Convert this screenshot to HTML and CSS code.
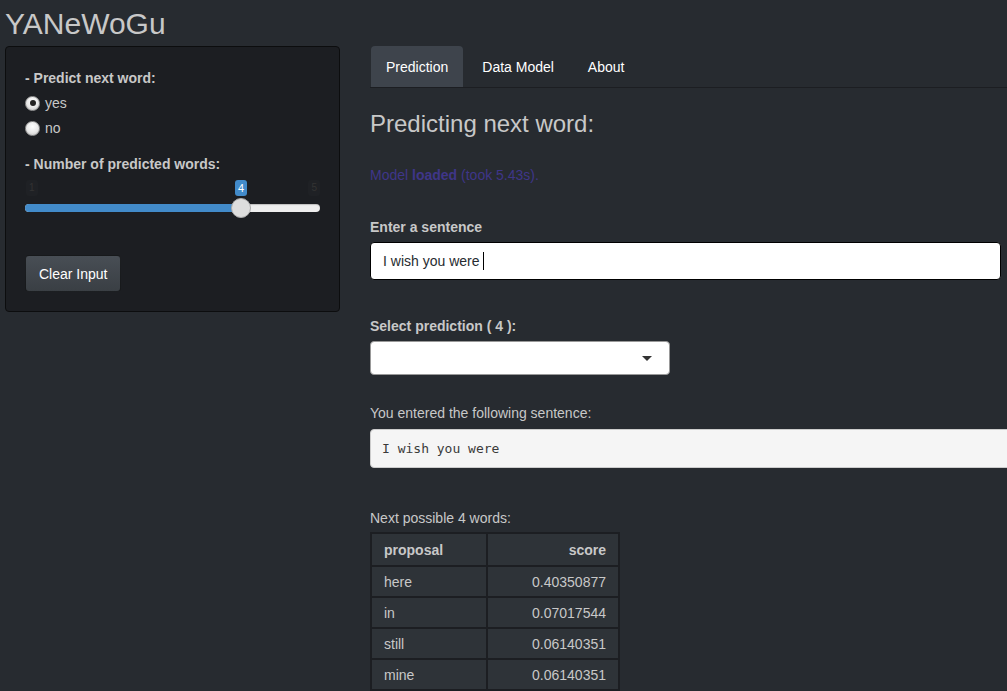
FILE: index.html
```html
<!DOCTYPE html>
<html>
<head>
<meta charset="utf-8">
<link rel="stylesheet" href="styles.css">
</head>
<body>
<h2 class="title">YANeWoGu</h2>
<div class="row">
  <div class="well">
    <div class="form-group">
      <label class="ctl-label">- Predict next word:</label>
      <div class="radio"><span class="rb rb-on"></span><span>yes</span></div>
      <div class="radio"><span class="rb"></span><span>no</span></div>
    </div>
    <div class="form-group">
      <label class="ctl-label">- Number of predicted words:</label>
      <div class="slider">
        <div class="ticks">
          <span class="tick">1</span>
          <span class="tick tick-val">4</span>
          <span class="tick">5</span>
        </div>
        <div class="track">
          <div class="fill"></div>
          <div class="handle"></div>
        </div>
      </div>
    </div>
    <button class="btn">Clear Input</button>
  </div>
  <div class="main">
    <ul class="tabs">
      <li class="tab active">Prediction</li>
      <li class="tab">Data Model</li>
      <li class="tab">About</li>
    </ul>
    <h3 class="heading">Predicting next word:</h3>
    <p class="status">Model <b>loaded</b> (took 5.43s).</p>
    <label class="ctl-label lbl-enter">Enter a sentence</label>
    <div class="input"><span>I wish you were </span><span class="caret"></span></div>
    <label class="ctl-label lbl-select">Select prediction ( 4 ):</label>
    <div class="select"><span class="arrow"></span></div>
    <p class="plain lbl-entered">You entered the following sentence:</p>
    <pre class="pre">I wish you were</pre>
    <p class="plain lbl-next">Next possible 4 words:</p>
    <table class="tbl">
      <thead><tr><th>proposal</th><th class="r">score</th></tr></thead>
      <tbody>
        <tr><td>here</td><td class="r">0.40350877</td></tr>
        <tr><td>in</td><td class="r">0.07017544</td></tr>
        <tr><td>still</td><td class="r">0.06140351</td></tr>
        <tr><td>mine</td><td class="r">0.06140351</td></tr>
      </tbody>
    </table>
  </div>
</div>
</body>
</html>
```
FILE: styles.css
```css
html, body {
  margin: 0;
  padding: 0;
  background: #272b30;
  color: #c8c8c8;
  font-family: "Liberation Sans", Arial, sans-serif;
  font-size: 14px;
  line-height: 20px;
  overflow: hidden;
  height: 691px;
}
.title {
  margin: 7px 0 6px 5px;
  font-size: 30px;
  line-height: 33px;
  font-weight: 400;
  color: #c8c8c8;
}
.row {
  display: flex;
  align-items: flex-start;
}
.well {
  box-sizing: border-box;
  flex: none;
  width: 335px;
  margin-left: 5px;
  padding: 21px 19px 19px 19px;
  background: #1c1e22;
  border: 1px solid #0c0d0e;
  border-radius: 4px;
  display: flex;
  flex-direction: column;
  align-items: flex-start;
}
.form-group {
  width: 100%;
  margin-bottom: 11px;
}
.ctl-label {
  display: block;
  font-weight: 700;
  margin-bottom: 5px;
}
.radio {
  display: flex;
  align-items: center;
  height: 20px;
  margin-bottom: 5px;
  gap: 5px;
}
.rb {
  box-sizing: border-box;
  width: 15px;
  height: 15px;
  border-radius: 50%;
  background: radial-gradient(circle at 50% 35%, #ffffff 0%, #e8e8e8 55%, #bdbdbd 100%);
  border: 1px solid #9a9a9a;
  position: relative;
}
.rb-on::after {
  content: "";
  position: absolute;
  left: 3.5px;
  top: 3.5px;
  width: 6px;
  height: 6px;
  border-radius: 50%;
  background: #222;
}
.slider {
  width: 100%;
  padding-top: 1px;
}
.ticks {
  position: relative;
  height: 19px;
}
.tick {
  position: absolute;
  top: 0;
  font-size: 10px;
  line-height: 14px;
  padding: 1px 3px;
  border-radius: 3px;
  background: #1f2125;
  color: #333;
}
.tick:nth-child(1) { left: 1px; }
.tick:nth-child(3) { right: 0; }
.tick-val {
  left: 210px;
  background: #428bca;
  color: #fff;
  font-size: 11px;
}
.track {
  position: relative;
  height: 8px;
  margin-top: 5px;
  border-radius: 4px;
  background: #eeeeee;
  box-shadow: inset 0 1px 1px rgba(0,0,0,0.2);
}
.fill {
  width: 216px;
  height: 8px;
  border-radius: 4px 0 0 4px;
  background: #428bca;
}
.handle {
  position: absolute;
  left: 206px;
  top: -6px;
  box-sizing: border-box;
  width: 20px;
  height: 20px;
  border-radius: 50%;
  background: #dddddd;
  border: 1px solid #aaaaaa;
}
.btn {
  margin-top: 32px;
  height: 37px;
  padding: 0 13px;
  font-family: inherit;
  font-size: 14px;
  color: #ffffff;
  background: linear-gradient(#484e55, #3a3f44);
  border: 1px solid rgba(0,0,0,0.6);
  border-radius: 4px;
}
.main {
  margin-left: 30px;
  width: 680px;
  flex: none;
}
.tabs {
  list-style: none;
  margin: 0;
  padding: 0 0 0 1px;
  display: flex;
  border-bottom: 1px solid #1c1e22;
  height: 41px;
}
.tab {
  padding: 2px 15px 0 15px;
  line-height: 39px;
  color: #ffffff;
  margin-right: 4px;
  border-radius: 4px 4px 0 0;
}
.tab.active {
  background: #3e444c;
}
.heading {
  margin: 22px 0 0 0;
  font-size: 24px;
  line-height: 27px;
  font-weight: 400;
  color: #c8c8c8;
}
.status {
  margin: 28px 0 0 0;
  color: #3f3689;
}
.lbl-enter { margin-top: 32px; }
.input {
  box-sizing: border-box;
  width: 631px;
  height: 38px;
  margin-top: 2px;
  padding: 0 12px;
  background: #fff;
  border: 1px solid #000;
  border-radius: 4px;
  display: flex;
  align-items: center;
  color: #272b30;
  white-space: pre;
}
.caret {
  width: 1px;
  height: 18px;
  background: #000;
}
.lbl-select { margin-top: 36px; }
.select {
  box-sizing: border-box;
  width: 300px;
  height: 34px;
  margin-top: 0;
  background: #fff;
  border: 1px solid #999;
  border-radius: 4px;
  position: relative;
}
.arrow {
  position: absolute;
  right: 17px;
  top: 14px;
  border-left: 5px solid transparent;
  border-right: 5px solid transparent;
  border-top: 5px solid #333;
}
.plain { margin: 0; }
.lbl-entered { margin-top: 28px; }
.pre {
  box-sizing: border-box;
  margin: 6px 0 0 0;
  height: 39px;
  width: 680px;
  padding: 9px 11px;
  background: #f5f5f5;
  border: 1px solid #ccc;
  border-radius: 4px;
  color: #3a3a3a;
  font-family: "DejaVu Sans Mono", "Liberation Mono", monospace;
  font-size: 13px;
  line-height: 20px;
}
.lbl-next { margin-top: 40px; }
.tbl {
  margin-top: 4px;
  border-collapse: collapse;
  background: #2e3338;
  width: 250px;
}
.tbl th, .tbl td {
  border: 2px solid #1c1e22;
  height: 27px;
  padding: 1px 12px 1px 12px;
  text-align: left;
}
.tbl th { font-weight: 700; height: 29px; }
.tbl th:first-child, .tbl td:first-child { width: 90px; }
.tbl .r { text-align: right; }
```
